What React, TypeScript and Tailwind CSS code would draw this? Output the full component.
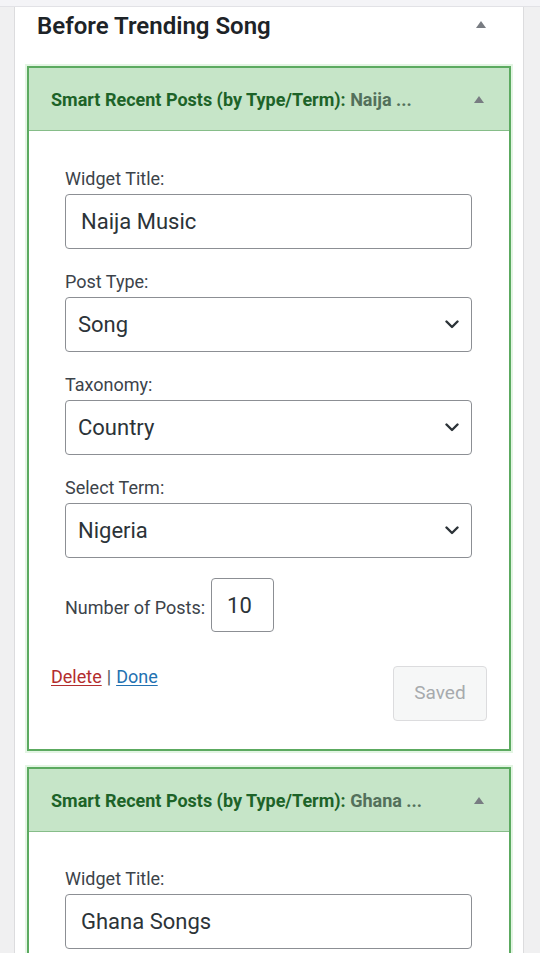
import React from 'react';

const Caret = ({ className = '' }: { className?: string }) => (
  <svg viewBox="0 0 10 7" className={`w-[10px] h-[7px] ${className}`}>
    <path d="M5 0 L10 7 L0 7 Z" fill="#787c82" />
  </svg>
);

const Chevron = () => (
  <svg viewBox="0 0 14 9" className="w-[14px] h-[9px]">
    <path d="M1.5 1.5 L7 7 L12.5 1.5" fill="none" stroke="#2c3338" strokeWidth="2.4" strokeLinecap="round" strokeLinejoin="round" />
  </svg>
);

const Field = ({ label, value, select, first }: { label: string; value: string; select?: boolean; first?: boolean }) => (
  <div className={first ? '' : 'mt-[22px]'}>
    <div className="text-[18px] leading-[22px] text-[#3c434a]">{label}</div>
    <div className={`mt-[4px] h-[55px] flex items-center justify-between rounded-[4px] border border-[#8c8f94] bg-white ${select ? 'pl-[12px] pr-[12px]' : 'pl-[15px]'}`}>
      <span className="text-[22px] text-[#2c3338]">{value}</span>
      {select && <Chevron />}
    </div>
  </div>
);

const WidgetHeader = ({ name }: { name: string }) => (
  <div className="h-[63px] flex items-center justify-between pl-[22px] pr-[25px] bg-[#c6e5c8] border-b border-[#86bd89]">
    <div className="text-[18px] font-bold text-[#1d6328] whitespace-nowrap">
      Smart Recent Posts (by Type/Term): <span className="text-[#53705b]">{name}</span>
    </div>
    <Caret />
  </div>
);

const boxCls = 'mx-[12px] border-2 border-[#5caa60] bg-white shadow-[0_0_0_2px_#e3f5e3]';

export default function App() {
  return (
    <div className="h-[953px] bg-[#f0f0f1] font-['Roboto',sans-serif] overflow-hidden">
      <div className="h-[7px] bg-[#f4f4f7] border-b border-[#e2e2e6]" />
      <div className="ml-[14px] w-[510px] bg-white border-x border-[#dcdcde] pb-[40px]">
        <div className="flex items-center justify-between pl-[22px] pr-[37px] h-[38px]">
          <h2 className="text-[24px] leading-[30px] font-semibold text-[#1d2327]">Before Trending Song</h2>
          <Caret className="-mt-[4px]" />
        </div>
        <div className="h-[21px]" />

        <div className={boxCls}>
          <WidgetHeader name="Naija ..." />
          <div className="pl-[36px] pr-[37px] pt-[37px]">
            <Field first label="Widget Title:" value="Naija Music" />
            <Field select label="Post Type:" value="Song" />
            <Field select label="Taxonomy:" value="Country" />
            <Field select label="Select Term:" value="Nigeria" />
            <div className="mt-[20px] flex items-center gap-[6px]">
              <span className="text-[18px] text-[#3c434a] pt-[4px]">Number of Posts:</span>
              <div className="w-[63px] h-[54px] rounded-[4px] border border-[#8c8f94] flex items-center pl-[15px] text-[22px] text-[#2c3338]">10</div>
            </div>
          </div>
          <div className="flex items-start justify-between px-[22px] pt-[34px] pb-[28px]">
            <div className="text-[18px] leading-[22px] text-[#50575e]">
              <a className="text-[#b32d2e] underline underline-offset-2">Delete</a>
              <span className="mx-[5px]">|</span>
              <a className="text-[#2271b1] underline underline-offset-2">Done</a>
            </div>
            <button className="w-[94px] h-[55px] rounded-[4px] border border-[#dcdcde] bg-[#f6f7f7] text-[19px] text-[#a7aaad]">Saved</button>
          </div>
        </div>

        <div className={`${boxCls} mt-[16px]`}>
          <WidgetHeader name="Ghana ..." />
          <div className="pl-[36px] pr-[37px] pt-[36px] pb-[30px]">
            <Field first label="Widget Title:" value="Ghana Songs" />
          </div>
        </div>
      </div>
    </div>
  );
}
